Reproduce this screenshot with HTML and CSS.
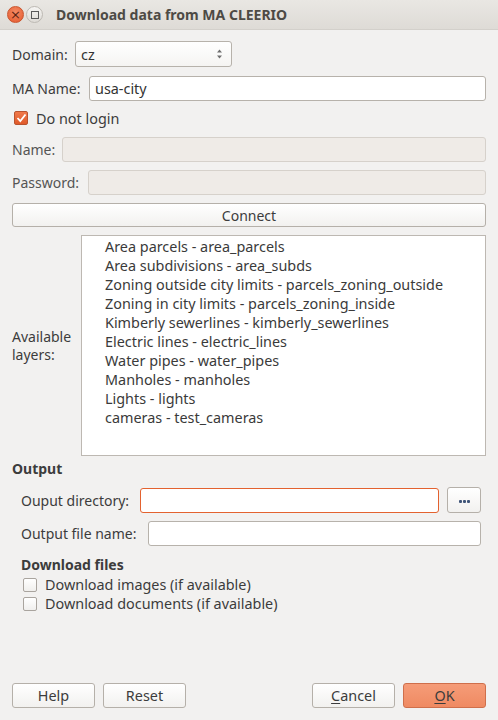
FILE: index.html
```html
<!DOCTYPE html>
<html>
<head>
<meta charset="utf-8">
<link rel="stylesheet" href="styles.css">
</head>
<body>
<div class="window">
  <div class="titlebar">
    <span class="tb-btn tb-close">×</span>
    <span class="tb-btn tb-max"><span class="sq"></span></span>
    <span class="title">Download data from MA CLEERIO</span>
  </div>
  <div class="content">
    <div class="row r-domain">
      <span class="lbl w-domain">Domain:</span>
      <div class="combo"><span>cz</span>
        <svg class="spin" width="7" height="12" viewBox="0 0 7 12"><path d="M3.5 1.5 L6 4.5 H1 Z M3.5 10.5 L6 7.5 H1 Z" fill="#6e6e6e"/></svg>
      </div>
    </div>
    <div class="row r-maname">
      <span class="lbl w-maname">MA Name:</span>
      <div class="field">usa-city</div>
    </div>
    <div class="row r-check">
      <span class="cb checked"><svg width="11" height="10" viewBox="0 0 11 10"><path d="M1.5 5 L4.3 8 L9.5 1.5" fill="none" stroke="#fff" stroke-width="1.8"/></svg></span>
      <span class="cb-text">Do not login</span>
    </div>
    <div class="row r-name">
      <span class="lbl w-name dim">Name:</span>
      <div class="field disabled"></div>
    </div>
    <div class="row r-pass">
      <span class="lbl w-pass dim">Password:</span>
      <div class="field disabled"></div>
    </div>
    <div class="button wide">Connect</div>
    <div class="row r-layers">
      <div class="lbl w-layers"><div>Available</div><div>layers:</div></div>
      <ul class="list">
        <li>Area parcels - area_parcels</li>
        <li>Area subdivisions - area_subds</li>
        <li>Zoning outside city limits - parcels_zoning_outside</li>
        <li>Zoning in city limits - parcels_zoning_inside</li>
        <li>Kimberly sewerlines - kimberly_sewerlines</li>
        <li>Electric lines - electric_lines</li>
        <li>Water pipes - water_pipes</li>
        <li>Manholes - manholes</li>
        <li>Lights - lights</li>
        <li>cameras - test_cameras</li>
      </ul>
    </div>
    <div class="heading">Output</div>
    <div class="group">
      <div class="row r-dir">
        <span class="lbl w-dir">Ouput directory:</span>
        <div class="field error"></div>
        <div class="button dots"><span class="dot"></span><span class="dot"></span><span class="dot"></span></div>
      </div>
      <div class="row r-file">
        <span class="lbl w-file">Output file name:</span>
        <div class="field"></div>
      </div>
      <div class="heading sub">Download files</div>
      <div class="row r-cb2">
        <span class="cb"></span>
        <span class="cb-text">Download images (if available)</span>
      </div>
      <div class="row r-cb3">
        <span class="cb"></span>
        <span class="cb-text">Download documents (if available)</span>
      </div>
    </div>
    <div class="spacer"></div>
    <div class="buttons">
      <div class="button btn">Help</div>
      <div class="button btn">Reset</div>
      <div class="gap"></div>
      <div class="button btn"><u>C</u>ancel</div>
      <div class="button btn ok"><u>O</u>K</div>
    </div>
  </div>
</div>
</body>
</html>
```

FILE: styles.css
```css
html, body {
  margin: 0;
  padding: 0;
}
body {
  background: #f2f1f0;
  font-family: "Noto Sans", "DejaVu Sans", sans-serif;
  font-size: 14px;
  color: #3c3c3c;
}
.window {
  width: 498px;
  height: 720px;
  display: flex;
  flex-direction: column;
}
.titlebar {
  height: 29px;
  flex: none;
  display: flex;
  align-items: center;
  background: linear-gradient(#e9e7e3, #dedbd6);
  border-bottom: 1px solid #d3d0cb;
  padding-left: 7px;
}
.tb-btn {
  width: 17px;
  height: 17px;
  border-radius: 50%;
  display: flex;
  align-items: center;
  justify-content: center;
  box-sizing: border-box;
}
.tb-close {
  background: radial-gradient(circle at 50% 35%, #f48a64, #e5592c);
  border: 1px solid #c9542d;
  color: #5a2210;
  font-size: 13px;
  line-height: 1;
  font-family: "DejaVu Sans", sans-serif;
}
.tb-max {
  margin-left: 2px;
  background: linear-gradient(#f6f5f3, #dedbd6);
  border: 1px solid #bdb9b3;
}
.tb-max .sq {
  width: 6px;
  height: 6px;
  border: 1px solid #5a5a5a;
}
.title {
  margin-left: 13px;
  font-weight: bold;
  font-size: 14px;
  color: #4d4a45;
}
.content {
  flex: 1;
  display: flex;
  flex-direction: column;
  padding: 11px 12px 12px 12px;
}
.row {
  display: flex;
  align-items: center;
}
.lbl {
  flex: none;
  white-space: nowrap;
}
.dim { color: #555; }
.w-domain { width: 63px; }
.w-maname { width: 77px; }
.w-name { width: 50px; }
.w-pass { width: 76px; }
.w-layers { width: 69px; line-height: 18px; }
.w-dir { width: 119px; }
.w-file { width: 127px; }
.combo, .field {
  height: 25px;
  box-sizing: border-box;
  border: 1px solid #b7b2ab;
  border-radius: 3px;
  background: #fff;
  display: flex;
  align-items: center;
  padding-left: 5px;
  font-size: 14.4px;
  color: #333;
}
.combo {
  width: 157px;
  height: 26px;
  justify-content: space-between;
  padding-right: 8px;
  background: linear-gradient(#ffffff, #f5f4f2);
}
.field { flex: 1; }
.field.disabled {
  background: #efebe7;
  border-color: #d6d1cb;
}
.field.error {
  border-color: #e3622f;
}
.r-maname { margin-top: 9px; }
.r-check { margin-top: 7px; height: 20px; }
.cb {
  width: 14px;
  height: 14px;
  box-sizing: border-box;
  border: 1px solid #a9a49e;
  border-radius: 2px;
  background: linear-gradient(#ffffff, #f0efed);
  display: flex;
  align-items: center;
  justify-content: center;
  margin-left: 2px;
}
.cb.checked {
  background: linear-gradient(#f0794a, #e05a2a);
  border-color: #b9532f;
}
.cb-text {
  margin-left: 8px;
  font-size: 14.4px;
}
.r-name { margin-top: 9px; }
.r-pass { margin-top: 8px; }
.button {
  box-sizing: border-box;
  height: 25px;
  border: 1px solid #b5b0a9;
  border-radius: 3px;
  background: linear-gradient(#ffffff, #f2f1ef);
  display: flex;
  align-items: center;
  justify-content: center;
  color: #3c3c3c;
  font-size: 14px;
}
.wide { margin-top: 8px; height: 24px; }
.r-layers {
  margin-top: 8px;
  height: 221px;
}
.list {
  flex: 1;
  height: 221px;
  margin: 0;
  padding: 1px 0 0 23px;
  box-sizing: border-box;
  list-style: none;
  background: #fff;
  border: 1px solid #bdb8b2;
  font-size: 14.4px;
  line-height: 19px;
  color: #3a3a3a;
}
.heading {
  font-weight: bold;
  font-size: 14px;
  margin-top: 3px;
  height: 20px;
  line-height: 20px;
  color: #3c3c3c;
}
.group {
  padding: 0 5px 0 9px;
}
.r-dir { margin-top: 8px; }
.r-dir .field { margin-right: 8px; }
.dots {
  width: 34px;
  height: 26px;
  gap: 1px;
  padding-top: 3px;
}
.dot {
  width: 3px;
  height: 3px;
  background: #3f5578;
  border-radius: 1px;
}
.r-file { margin-top: 8px; }
.heading.sub { margin-top: 9px; height: 20px; line-height: 20px; }
.r-cb2, .r-cb3 { height: 19px; }
.spacer { flex: 1; }
.buttons {
  display: flex;
  align-items: center;
  gap: 8px;
}
.btn { width: 83px; height: 25px; font-size: 14.4px; }
.gap { flex: 1; }
.ok {
  background: linear-gradient(#f59c78, #ef8a62);
  border-color: #cf6f4b;
}
u { text-decoration-thickness: 1px; text-underline-offset: 2px; }
```
